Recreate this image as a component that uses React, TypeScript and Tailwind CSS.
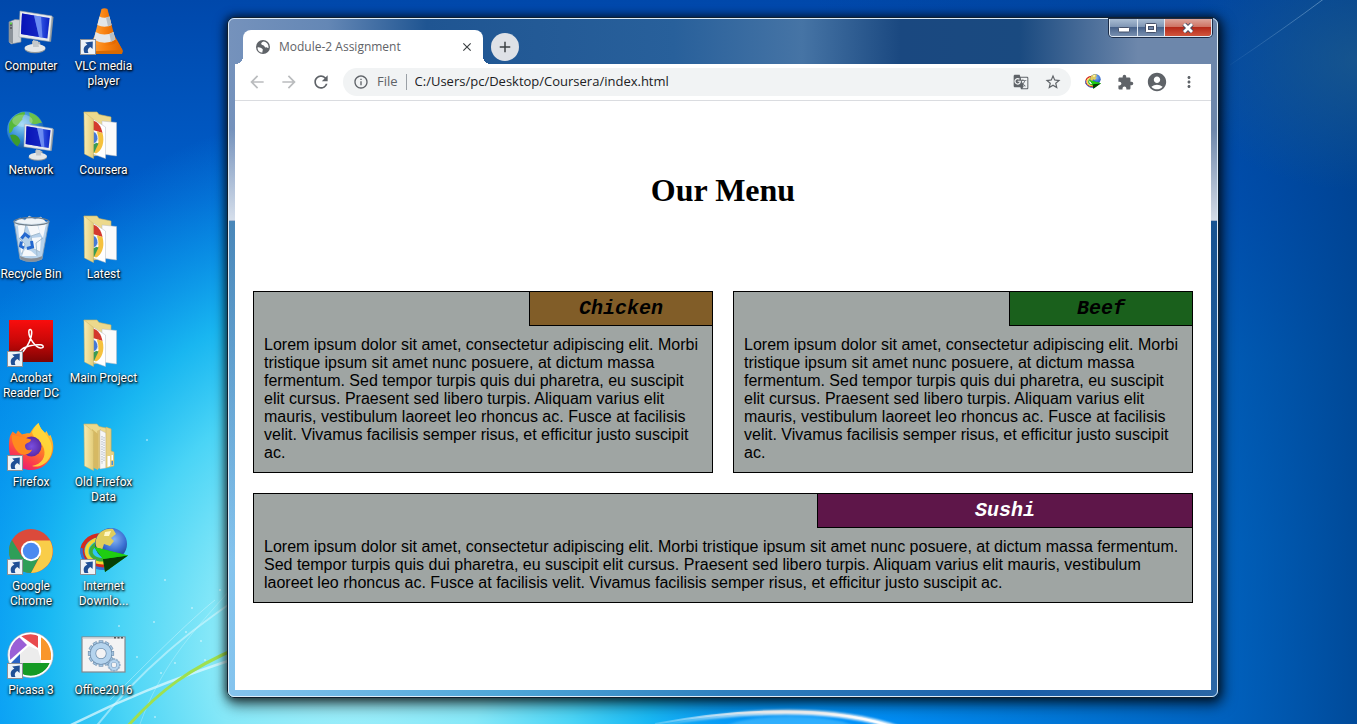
import type { ReactNode } from "react";
import {
  MdAccountCircle,
  MdAdd,
  MdArrowBack,
  MdArrowForward,
  MdClose,
  MdExtension,
  MdGTranslate,
  MdInfoOutline,
  MdMoreVert,
  MdRefresh,
  MdStarBorder,
} from "react-icons/md";

function Icon({ children, className = "size-12" }: { children: ReactNode; className?: string }) {
  return (
    <svg viewBox="0 0 48 48" className={`${className} shrink-0 overflow-visible`} aria-hidden="true">
      {children}
    </svg>
  );
}

function ShortcutArrow() {
  return (
    <g>
      <rect x="0.5" y="31.5" width="15" height="15" fill="#eef3f8" stroke="#8b8f96" />
      <path
        d="M4.500 45C2.800 41 4 37.800 7.400 36.800L5.200 34.600L12.800 33.400L12.600 41L10.400 39C8 40.200 7 42.200 8.400 45Z"
        fill="#1f4f96"
      />
    </g>
  );
}

function Monitor() {
  return (
    <g>
      <path d="M25 33L33 34L34 40H25Z" fill="#a9b0b5" />
      <ellipse cx="28" cy="41" rx="10.5" ry="4.2" fill="#8d959a" />
      <ellipse cx="28" cy="40" rx="10.5" ry="4" fill="#e4e7e8" />
      <path d="M26 32L31 33L32 39L26 39Z" fill="#c3c8cb" />
      <path d="M44 8L46.5 9L44 34L42 33Z" fill="#8f989e" />
      <path d="M13 3L45 8L42.5 33.5L12 29Z" fill="#e9ecee" stroke="#9aa4ab" strokeWidth="0.6" />
      <path d="M15 5.5L42.6 10L40.4 30.5L14 26Z" fill="url(#screen)" />
      <path d="M15 5.5L27 7.4L32 29L14 26Z" fill="#0712b4" opacity="0.75" />
      <path d="M27 7.4L34 8.6L35.5 29.6L32 29Z" fill="#7d9cf5" opacity="0.75" />
    </g>
  );
}

function ComputerIcon() {
  return (
    <Icon>
      <path d="M2 14L8 11.5L14 12V34L4 36L2 34Z" fill="#cfd4d8" stroke="#8a9299" strokeWidth="0.6" />
      <path d="M2 14L6 14.5V36L2 34Z" fill="#8b939a" />
      <path d="M3 17H5M3 20H5" stroke="#333" />
      <circle cx="4" cy="15.5" r="1" fill="#5be33c" />
      <Monitor />
    </Icon>
  );
}

function Globe({ cx, cy, r }: { cx: number; cy: number; r: number }) {
  const s = r / 18;
  return (
    <g transform={`translate(${cx} ${cy}) scale(${s})`}>
      <circle r="18" fill="url(#ocean)" />
      <path d="M-16 -6C-12 -14 -7 -17 -1 -17.6C1 -15 -4 -13 -3 -10C-6 -8 -7 -4 -11 -3C-13 -1 -12 2 -16 3Z" fill="#57b83a" />
      <path d="M3 -17C9 -16 14 -12 16 -7C12 -7 9 -4 5 -7C2 -9 6 -12 3 -17Z" fill="#6cc24a" />
      <path d="M-15 5C-10 3 -6 7 -5 11C-6 14 -7 15 -8 16C-12 13 -14 9 -15 5Z" fill="#3c9c2c" />
      <path d="M2 1C7 -1 12 2 11 7C9 12 6 13 4 11C4 7 1 5 2 1Z" fill="#4cae38" />
      <ellipse cx="-3" cy="-9" rx="10" ry="6" fill="#fff" opacity="0.25" />
    </g>
  );
}

function NetworkIcon() {
  return (
    <Icon>
      <Globe cx={18.5} cy={18} r={18.5} />
      <g transform="translate(6.500 9.500) scale(.87)">
        <Monitor />
      </g>
    </Icon>
  );
}

function VlcIcon() {
  return (
    <Icon>
      <path d="M14 30L35 29L43 43L42 46H8L7 43Z" fill="#d96a00" />
      <path d="M14 29L35 28.5L42.5 42L8 43.5Z" fill="url(#orange)" />
      <path d="M21.500 1Q24.500 -0.500 27.500 1L36 34C33 39 16 39 13 34Z" fill="url(#orange)" />
      <path d="M19.400 8.500Q24.500 11 29.500 8.500L31.500 17Q24.500 20.500 17.300 17Z" fill="#e3e6e8" />
      <path d="M15.600 24Q24.500 29 33.500 24L35.400 31.500Q24.500 38 13.700 31.500Z" fill="#e3e6e8" />
      <path d="M26 9.600L29.300 8.500L31.500 17L28 18.600ZM29.500 26L33.300 24L35.400 31.500L31 34Z" fill="#b9bfc4" />
      <ShortcutArrow />
    </Icon>
  );
}

function FolderIcon({ old = false }: { old?: boolean }) {
  return (
    <Icon>
      <path d="M4 0H17L19 2.500L31 5V40L14 44Z" fill="#ecd98c" stroke="#c9b25f" strokeWidth="0.6" />
      {old ? (
        <g>
          <path d="M17 7L21 5V44L17 45Z" fill="#dcc274" />
          <path d="M20 6L26 9V44L20 45Z" fill="#f7f7f7" stroke="#b6b6b6" strokeWidth="0.4" />
          <path d="M22 12V40M24 13V38" stroke="#8d98a8" strokeWidth="0.7" strokeDasharray="1.500 1" />
          <path d="M26 3L31 5V27L34 28V42L26 44Z" fill="#e8d181" stroke="#c9ae5c" strokeWidth="0.5" />
          <path d="M27.500 32H30V42L27.500 43Z" fill="#fff" />
          <path d="M31.500 31H33V36H31.500Z" fill="#fff" />
          <path d="M31.500 37H33V41H31.500Z" fill="#4a90d9" />
          <path d="M12 5L18 10V46L12 43Z" fill="#d6b963" />
        </g>
      ) : (
        <g>
          <path d="M22 9L36.500 10.500V44L22 42Z" fill="#fbfbfb" stroke="#b9bdc2" strokeWidth="0.5" />
          <path d="M13 7L25.500 15V46.500L13 42Z" fill="#fff" stroke="#b9bdc2" strokeWidth="0.5" />
          <path d="M13 8.500C18 10 21 14 22.500 21L13 18Z" fill="#d4392d" />
          <path d="M22.500 21C25 30 22 39 16 41.500L13 40L18.500 30L17 19.300Z" fill="#f5c13d" />
          <path d="M13 30L18.500 31.500L14 41L13 40.500Z" fill="#3a9b54" />
          <path d="M13 19Q18 21 18 27Q17 31.500 13 32Z" fill="#4579d4" stroke="#fff" strokeWidth="0.8" />
        </g>
      )}
      <path d="M4 0L13.500 7.500V46.500L4.500 42Z" fill="url(#flap)" stroke="#cdb76a" strokeWidth="0.5" />
    </Icon>
  );
}

function RecycleBinIcon() {
  return (
    <Icon>
      <path d="M8 6L13 2L18 4L22 0L28 3L34 1L39 6V10H8Z" fill="#eef3f7" stroke="#aebfcf" strokeWidth="0.7" />
      <path d="M7 5L13 43Q24 48 35 43L42 5Q24 11 7 5Z" fill="#cfe0ee" opacity="0.88" />
      <path d="M11 10L19 8L17 18L12 22ZM20 9L30 8L33 17L24 20ZM31 9L39 8L36 22L33 17ZM13 24L18 28L16 38L14 36ZM25 22L34 21L33 36L24 32ZM18 33L24 35L30 40H15Z" fill="#f5f8fb" />
      <path d="M19 8L17 18L24 20L25 32L33 36M33 17L24 20M36 22L29 27L30 40M12 22L18 28L15 38" fill="none" stroke="#9db5ca" strokeWidth="0.9" />
      <ellipse cx="24.500" cy="5.500" rx="17.500" ry="3.800" fill="none" stroke="#6e7d8a" strokeWidth="1.200" />
      <path d="M13 40Q24 45 35.500 40L35 43.500Q24 48.500 13.500 43.500Z" fill="#8a8e93" />
      <g fill="none" stroke="#2468cf" strokeWidth="3">
        <path d="M14.500 22.500L18 18L22.500 21.500" />
        <path d="M24.500 25L25.500 31L20 32.500" />
        <path d="M17 32L13.500 30L14.500 25.500" />
      </g>
      <path d="M7 5L13 43Q24 48 35 43L42 5" fill="none" stroke="#8299ae" strokeWidth="0.8" />
    </Icon>
  );
}

function AcrobatIcon() {
  return (
    <Icon>
      <rect x="2" y="0" width="44" height="42" fill="url(#acro)" />
      <path
        d="M13.500 30.500C11.500 33.500 14 34 16.500 31C20.500 26.500 25 18 24.700 12C24.600 8.500 21.800 8.700 21.800 12C22 18.500 28.500 27.500 33.500 28C37 28.200 37.200 25.300 33.500 24.800C27 24.200 16.500 26.500 13.500 30.500Z"
        fill="none"
        stroke="#fff"
        strokeWidth="1.500"
      />
      <ShortcutArrow />
    </Icon>
  );
}

function FirefoxIcon() {
  return (
    <Icon>
      <path
        d="M3 12L5.500 7.500L9 10L11 6.500L15 10.500C17 9.600 20 9 23 9.200C25 5.500 28 2 31.500 -1C32.500 3 35 6 38 9L39.500 7L42 12L43.500 11C46 17 47.300 23 45.500 29C42.500 39.500 34 46 24 46C11.500 46 2 36.500 2 24.500C1.800 20 2 16 3 12Z"
        fill="url(#fox)"
      />
      <path d="M31.500 -1C32.500 3 35 6 38 9C43 15 47 22 44 31C40 41 31 44 25 42C35 40 39 33 37 25C35 17 26 15 25 8C27 4 29 1 31.500 -1Z" fill="#ffd93b" opacity="0.9" />
      <circle cx="24.500" cy="22.500" r="10" fill="url(#purple)" />
      <path d="M5 11C10 11 12 13 15 13L24 15.500C24 19 18 18.500 18 22C18 26 22 27 25 25.500C23 31 15 33 10 27C7 23 4 17 5 11Z" fill="#ff8a1f" />
      <ShortcutArrow />
    </Icon>
  );
}

function ChromeIcon() {
  return (
    <Icon>
      <circle cx="24" cy="23" r="22" fill="#db4a3b" />
      <path d="M4.950 12L15 28.500L24 33L33 28L24 45A22 22 0 0 1 4.950 12Z" fill="#2f9e58" />
      <path d="M33.200 28L24 45A22 22 0 0 0 43.050 12.500H24Z" fill="#f9cd49" />
      <circle cx="24" cy="23" r="10.200" fill="#fff" />
      <circle cx="24" cy="23" r="8.200" fill="#4a8af0" />
      <ShortcutArrow />
    </Icon>
  );
}

function IdmArt() {
  return (
    <g>
      <g fill="none">
        <path d="M22 7C8 7 0 17 3 27C6 36 18 40 30 37" stroke="#d42a1e" strokeWidth="4" />
        <path d="M22 10.500C12 11 5 18 7 26C9 33 19 36 29 34" stroke="#f7d531" strokeWidth="3.500" />
        <path d="M22 14C15 15 10 20 11 25C13 31 20 33 28 31" stroke="#3fae37" strokeWidth="3.500" />
        <path d="M1.500 20C0 34 14 43 30 40" stroke="#2f6fd8" strokeWidth="2.500" />
      </g>
      <circle cx="31" cy="16" r="16" fill="url(#idmBall)" />
      <path d="M17 9C20 3 26 0 33 1L36 6L31 10L34 13L30 18L24 16L22 22L17 20C15 17 15 13 17 9Z" fill="#e0cd5c" />
      <path d="M25 4L31 3L29 8L24 8Z" fill="#fff8c4" />
      <path d="M14 19L48 27.500L25 44L23 31Z" fill="#12b70f" />
      <path d="M23 31L48 27.500L25 44Z" fill="#063f06" />
      <path d="M14 19L48 27.500L23 31Z" fill="#1fce12" />
    </g>
  );
}

function PicasaIcon() {
  return (
    <Icon>
      <circle cx="23.500" cy="23" r="22.500" fill="#fff" />
      <path d="M3 28C0 18 4 9 12 5L20 13Z" fill="#9a5fd6" />
      <path d="M14 4C20 1 27 1 31 4V16Z" fill="#e94b4f" />
      <path d="M34 5C42 10 45 19 44 28H34Z" fill="#f9962b" />
      <path d="M43 31C40 39 32 44 24 44C20 44 16 43 13 41V31Z" fill="#159a24" />
      <path d="M4 31L13 22V40C8 38 5 34 4 31Z" fill="#2b63c4" />
      <path d="M13 22L22 14L31 18L34 28V31H13Z" fill="#ececec" />
      <circle cx="23.500" cy="23" r="21.800" fill="none" stroke="#fff" strokeWidth="2" />
      <circle cx="23.500" cy="23" r="22.800" fill="none" stroke="#8a9cb0" strokeWidth="0.6" />
      <ShortcutArrow />
    </Icon>
  );
}

const teeth = [0, 30, 60, 90, 120, 150, 180, 210, 240, 270, 300, 330];

function Gear({ x, y, s }: { x: number; y: number; s: number }) {
  return (
    <g transform={`translate(${x} ${y}) scale(${s})`} stroke="#6f8fae">
      {teeth.map((a) => (
        <rect key={a} x="-2" y="-13" width="4" height="5" transform={`rotate(${a})`} fill="#a9cbe8" strokeWidth="0.7" />
      ))}
      <circle r="8.200" fill="none" strokeWidth="6.500" />
      <circle r="8.200" fill="none" stroke="#b5d4ee" strokeWidth="5" />
    </g>
  );
}

function BatchIcon() {
  return (
    <Icon>
      <rect x="2" y="5" width="43" height="35" fill="#f3f3f4" stroke="#85888d" strokeWidth="1.200" />
      <path d="M2.600 6H44.400" stroke="#cfd2d6" strokeWidth="1.500" />
      <path d="M34 5.800H43" stroke="#555" strokeWidth="1.500" strokeDasharray="2 1.500" />
      <Gear x={21} y={21.5} s={0.98} />
      <Gear x={34} y={33} s={0.48} />
    </Icon>
  );
}

const shortcuts: { lines: string[]; icon: ReactNode }[] = [
  { lines: ["Computer"], icon: <ComputerIcon /> },
  { lines: ["VLC media", "player"], icon: <VlcIcon /> },
  { lines: ["Network"], icon: <NetworkIcon /> },
  { lines: ["Coursera"], icon: <FolderIcon /> },
  { lines: ["Recycle Bin"], icon: <RecycleBinIcon /> },
  { lines: ["Latest"], icon: <FolderIcon /> },
  { lines: ["Acrobat", "Reader DC"], icon: <AcrobatIcon /> },
  { lines: ["Main Project"], icon: <FolderIcon /> },
  { lines: ["Firefox"], icon: <FirefoxIcon /> },
  { lines: ["Old Firefox", "Data"], icon: <FolderIcon old /> },
  { lines: ["Google", "Chrome"], icon: <ChromeIcon /> },
  {
    lines: ["Internet", "Downlo..."],
    icon: (
      <Icon>
        <IdmArt />
        <ShortcutArrow />
      </Icon>
    ),
  },
  { lines: ["Picasa 3"], icon: <PicasaIcon /> },
  { lines: ["Office2016"], icon: <BatchIcon /> },
];

function Defs() {
  return (
    <defs>
      <linearGradient id="screen" x1="0" x2="1">
        <stop offset="0" stopColor="#0a18c0" />
        <stop offset="0.6" stopColor="#3c62ea" />
        <stop offset="1" stopColor="#0a22c4" />
      </linearGradient>
      <radialGradient id="ocean" cx="0.4" cy="0.35" r="0.7">
        <stop offset="0" stopColor="#8fd2f4" />
        <stop offset="0.6" stopColor="#2c86d3" />
        <stop offset="1" stopColor="#124f9c" />
      </radialGradient>
      <linearGradient id="orange" x1="0" x2="1">
        <stop offset="0" stopColor="#ffa640" />
        <stop offset="0.5" stopColor="#f98210" />
        <stop offset="1" stopColor="#e06500" />
      </linearGradient>
      <linearGradient id="flap" x1="0" x2="1">
        <stop offset="0" stopColor="#f7ebb0" />
        <stop offset="1" stopColor="#e3cc78" />
      </linearGradient>
      <linearGradient id="acro" x1="0" x2="0" y1="0" y2="1">
        <stop offset="0" stopColor="#f90d0d" />
        <stop offset="0.5" stopColor="#c90808" />
        <stop offset="1" stopColor="#7d0404" />
      </linearGradient>
      <linearGradient id="fox" x1="0.8" x2="0.2" y1="0" y2="1">
        <stop offset="0" stopColor="#ffdf3f" />
        <stop offset="0.4" stopColor="#ff8a20" />
        <stop offset="0.75" stopColor="#fb3c4c" />
        <stop offset="1" stopColor="#e01585" />
      </linearGradient>
      <radialGradient id="purple">
        <stop offset="0" stopColor="#7a4fe0" />
        <stop offset="1" stopColor="#5a2aa8" />
      </radialGradient>
      <radialGradient id="idmBall" cx="0.6" cy="0.35" r="0.7">
        <stop offset="0" stopColor="#86b4f2" />
        <stop offset="0.5" stopColor="#3a6fd2" />
        <stop offset="1" stopColor="#123272" />
      </radialGradient>
      <linearGradient id="sky" x1="0" x2="0" y1="0" y2="1">
        <stop offset="0" stopColor="#0048ab" />
        <stop offset="0.28" stopColor="#005fcc" />
        <stop offset="0.5" stopColor="#0084e4" />
        <stop offset="0.75" stopColor="#0093f6" />
        <stop offset="1" stopColor="#0096ff" />
      </linearGradient>
      <linearGradient id="dusk" x1="0" x2="1">
        <stop offset="0.6" stopColor="#003f8c" stopOpacity="0" />
        <stop offset="0.9" stopColor="#00459c" stopOpacity="0.65" />
        <stop offset="1" stopColor="#00408c" stopOpacity="0.88" />
      </linearGradient>
      <radialGradient id="glow">
        <stop offset="0" stopColor="#a4f0fb" />
        <stop offset="0.3" stopColor="#86e8f8" />
        <stop offset="0.5" stopColor="#4ad4f6" />
        <stop offset="0.66" stopColor="#1cbcf2" stopOpacity="0.9" />
        <stop offset="0.82" stopColor="#0ea0ee" stopOpacity="0.55" />
        <stop offset="1" stopColor="#0a90ea" stopOpacity="0" />
      </radialGradient>
      <radialGradient id="corner">
        <stop offset="0" stopColor="#24608c" stopOpacity="0.6" />
        <stop offset="1" stopColor="#24608c" stopOpacity="0" />
      </radialGradient>
      <linearGradient id="arc" x1="0" x2="1">
        <stop offset="0" stopColor="#fff" stopOpacity="0.2" />
        <stop offset="0.5" stopColor="#fff" />
        <stop offset="1" stopColor="#fff" stopOpacity="0.9" />
      </linearGradient>
      <linearGradient id="streak" x1="0" x2="1" y1="1" y2="0">
        <stop offset="0" stopColor="#9cc4e4" stopOpacity="0.05" />
        <stop offset="1" stopColor="#9cc4e4" stopOpacity="0.5" />
      </linearGradient>
      <filter id="soft" x="-20%" y="-20%" width="140%" height="140%">
        <feGaussianBlur stdDeviation="1" />
      </filter>
    </defs>
  );
}

const stars = [
  [119, 626], [154, 622], [137, 657], [201, 641], [186, 632], [175, 663], [161, 673], [155, 717], [205, 660], [192, 608], [165, 580], [220, 590], [147, 440],
];

function Wallpaper() {
  return (
    <svg viewBox="0 0 1357 724" preserveAspectRatio="none" className="absolute inset-0 size-full" aria-hidden="true">
      <Defs />
      <rect width="1357" height="724" fill="url(#sky)" />
      <ellipse cx="350" cy="650" rx="460" ry="540" fill="url(#glow)" />
      <rect width="1357" height="724" fill="url(#dusk)" />
      <ellipse cx="1357" cy="60" rx="180" ry="130" fill="url(#corner)" />
      <path d="M1230 65Q1285 28 1325 -2" stroke="url(#streak)" fill="none" />
      <g fill="none" stroke="#e6fbff">
        <path d="M65 728C120 700 170 680 240 657" strokeWidth="2.500" strokeOpacity="0.7" />
        <path d="M95 728C140 670 190 630 250 590" strokeWidth="2" strokeOpacity="0.5" />
        <path d="M110 700C150 660 190 620 215 600" strokeOpacity="0.4" />
        <path d="M140 724C160 670 185 640 230 590" strokeOpacity="0.3" />
      </g>
      <path d="M126 728C160 690 190 668 240 647" fill="none" stroke="#9fe04e" strokeWidth="3" />
      {stars.map(([x, y]) => (
        <circle key={`${x}-${y}`} cx={x} cy={y} r="1" fill="#fff" fillOpacity="0.5" />
      ))}
      <ellipse cx="790" cy="740" rx="80" ry="24" fill="#5cc8ff" fillOpacity="0.5" filter="url(#soft)" />
      <path d="M655 726C740 706 835 702 905 728L888 728C830 709 745 712 655 726Z" fill="url(#arc)" filter="url(#soft)" />
      <path d="M655 724C740 708 830 706 890 726" fill="none" stroke="url(#arc)" strokeWidth="2" />
    </svg>
  );
}

function ToolButton({ label, children }: { label: string; children: ReactNode }) {
  return (
    <button type="button" aria-label={label} className="flex h-7 w-8 shrink-0 items-center justify-center text-[#5f6368]">
      {children}
    </button>
  );
}

function TitleBar() {
  return (
    <header className="flex h-[45px] items-start pl-2">
      <div className="relative mt-[11px] flex h-[34px] w-60 items-center rounded-t-lg bg-white pr-2 pl-3">
        <span className="absolute bottom-0 -left-2 size-2 bg-[radial-gradient(circle_at_0_0,transparent_8px,white_8px)]" />
        <span className="absolute -right-2 bottom-0 size-2 bg-[radial-gradient(circle_at_100%_0,transparent_8px,white_8px)]" />
        <svg viewBox="0 0 16 16" className="size-4" aria-hidden="true">
          <circle cx="8" cy="8" r="7" fill="#5f6368" />
          <path d="M2.500 8.500C4.500 8 6 9 7.500 10C8.500 11 7 12 7.500 13.500C4.500 13.500 2.500 11.500 2.500 8.500Z" fill="#fff" />
          <path d="M8.500 2.500C7 3.200 5.500 4 6.500 5.500C7.500 6.500 9 6 9.500 7.500C10 9 12 8.500 13.500 9C14 6 12 3 8.500 2.500Z" fill="#fff" />
        </svg>
        <span className="ml-2 flex-1 truncate text-xs text-[#5f6368]">Module-2 Assignment</span>
        <button type="button" aria-label="Close tab" className="flex size-4 items-center justify-center text-[#3c4043]">
          <MdClose className="size-[14px]" />
        </button>
      </div>
      <button
        type="button"
        aria-label="New tab"
        className="mt-[14px] ml-2 flex size-7 items-center justify-center rounded-full bg-[#dee1e6] text-[#3c4043]"
      >
        <MdAdd className="size-[18px]" />
      </button>
      <div className="-mr-px ml-auto flex h-[18px] divide-x divide-[#dfe8f2] overflow-hidden rounded-b border border-t-0 border-[#dfe8f2] shadow-[0_0_0_1px_#1b2c47]">
        <button type="button" aria-label="Minimize" className="flex w-7 items-center justify-center bg-[linear-gradient(#a9bdd3,#8097b5_45%,#47628a_50%,#7890b0)]">
          <svg viewBox="0 0 12 6" className="mt-1 h-[6px] w-3" aria-hidden="true">
            <rect x="0.500" y="0.500" width="11" height="4.500" rx="1" fill="#fff" stroke="#46526b" />
          </svg>
        </button>
        <button type="button" aria-label="Maximize" className="flex w-[27px] items-center justify-center bg-[linear-gradient(#a9bdd3,#8097b5_45%,#47628a_50%,#7890b0)]">
          <svg viewBox="0 0 12 10" className="h-[10px] w-3" aria-hidden="true">
            <rect x="0.500" y="0.500" width="11" height="9" rx="1" fill="#fff" stroke="#46526b" />
            <rect x="3.500" y="3.500" width="5" height="3" fill="#6f86a8" stroke="#46526b" />
          </svg>
        </button>
        <button type="button" aria-label="Close" className="flex w-[46px] items-center justify-center bg-[linear-gradient(#dda59b,#cf7465_45%,#b5291a_50%,#d1553c)]">
          <svg viewBox="0 0 12 10" className="h-[10px] w-3" aria-hidden="true">
            <path d="M2 1L10 9M10 1L2 9" stroke="#4a4f63" strokeWidth="4.600" />
            <path d="M2 1L10 9M10 1L2 9" stroke="#fff" strokeWidth="2.800" />
          </svg>
        </button>
      </div>
    </header>
  );
}

function Toolbar() {
  return (
    <div className="flex h-[37px] items-center border-b border-[#dadce0] bg-white px-[6px]">
      <button type="button" aria-label="Back" className="flex h-7 w-8 items-center justify-center text-[#babcbe]">
        <MdArrowBack className="size-5" />
      </button>
      <button type="button" aria-label="Forward" className="flex h-7 w-8 items-center justify-center text-[#babcbe]">
        <MdArrowForward className="size-5" />
      </button>
      <ToolButton label="Reload">
        <MdRefresh className="size-5" />
      </ToolButton>
      <div className="mx-[6px] flex h-7 flex-1 items-center rounded-full bg-[#f1f3f4] pr-[2px] pl-[10px]">
        <MdInfoOutline className="size-4 text-[#5f6368]" />
        <label htmlFor="address" className="ml-2 text-[13px] text-[#5f6368]">
          File
        </label>
        <span className="mx-2 h-4 w-px bg-[#9aa0a6]" />
        <input
          id="address"
          type="text"
          defaultValue="C:/Users/pc/Desktop/Coursera/index.html"
          className="min-w-0 flex-1 bg-transparent text-[13px] text-[#202124] outline-none"
        />
        <ToolButton label="Translate this page">
          <MdGTranslate className="size-4" />
        </ToolButton>
        <ToolButton label="Bookmark this page">
          <MdStarBorder className="size-[18px]" />
        </ToolButton>
      </div>
      <ToolButton label="Download manager">
        <Icon className="size-4">
          <IdmArt />
        </Icon>
      </ToolButton>
      <ToolButton label="Extensions">
        <MdExtension className="size-[17px]" />
      </ToolButton>
      <ToolButton label="Profile">
        <MdAccountCircle className="size-[22px]" />
      </ToolButton>
      <ToolButton label="More">
        <MdMoreVert className="size-[18px]" />
      </ToolButton>
    </div>
  );
}

const lorem =
  "Lorem ipsum dolor sit amet, consectetur adipiscing elit. Morbi tristique ipsum sit amet nunc posuere, at dictum massa fermentum. Sed tempor turpis quis dui pharetra, eu suscipit elit cursus. Praesent sed libero turpis. Aliquam varius elit mauris, vestibulum laoreet leo rhoncus ac. Fusce at facilisis velit. Vivamus facilisis semper risus, et efficitur justo suscipit ac.";

function MenuSection({ title, tone, className = "" }: { title: string; tone: string; className?: string }) {
  return (
    <section className={`border border-black bg-[#9fa5a3] ${className}`}>
      <h2
        className={`ml-auto flex h-[34px] w-2/5 items-center justify-center border-b border-l border-black font-['Liberation_Mono',monospace] text-xl font-bold italic ${tone}`}
      >
        {title}
      </h2>
      <p className="p-[10px] text-base leading-[18px] text-black">{lorem}</p>
    </section>
  );
}

export default function App() {
  return (
    <main className="relative flex min-h-screen overflow-hidden font-['Open_Sans',sans-serif]">
      <Wallpaper />
      <nav aria-label="Desktop" className="relative pt-2">
        <ul className="grid grid-cols-[62px_75px] gap-x-1 gap-y-[23px]">
          {shortcuts.map(({ lines, icon }) => (
            <li key={lines.join(" ")} className="min-h-[81px]">
              <button type="button" className="flex w-full flex-col items-center gap-[3px]">
                {icon}
                <span className="flex flex-col items-center font-[Roboto,sans-serif] text-xs leading-[15px] whitespace-nowrap text-white [text-shadow:1px_1px_2px_#000,0_1px_3px_#000]">
                  {lines.map((line) => (
                    <span key={line}>{line}</span>
                  ))}
                </span>
              </button>
            </li>
          ))}
        </ul>
      </nav>

      <div className="relative mt-[17px] mr-[138px] mb-[26px] ml-[86px] flex min-w-0 flex-1 rounded-[7px] border border-[#10202f] shadow-[0_0_8px_1px_rgba(0,0,0,0.6),2px_5px_14px_2px_rgba(0,0,0,0.6)]">
        <div className="flex min-w-0 flex-1 flex-col rounded-md border border-[#dcebf7] bg-[linear-gradient(180deg,transparent_110px,rgba(255,255,255,0.7)_201px,transparent_202px),linear-gradient(90deg,#7592bc,#6487b5_10%,#1f5592_20%,#28609b_45%,#4674a5_58%,#1a4880_68%,#1a4a80_80%,#6d87ab_92%,#6d87ab),linear-gradient(180deg,rgba(0,60,120,0.45)_202px,transparent_80%),linear-gradient(90deg,#85c4ee,#4ea6d8_28%,#2f80bf_50%,#1a5ea8_80%,#2a66a5)] bg-[length:100%_100%,100%_202px,100%_100%,100%_100%] bg-no-repeat px-[6px] pb-[6px]">
          <TitleBar />
          <Toolbar />
          <article className="flex-1 bg-white px-[18px] pb-[87px] font-['Liberation_Sans',Arial,sans-serif]">
            <h1 className="pt-[71px] pb-[83px] text-center font-['Liberation_Serif',serif] text-[32px] leading-9 font-bold text-black">
              Our Menu
            </h1>
            <div className="grid grid-cols-2 gap-5">
              <MenuSection title="Chicken" tone="bg-[#815d28] text-black" />
              <MenuSection title="Beef" tone="bg-[#1a601c] text-black" />
              <MenuSection title="Sushi" tone="bg-[#5e1649] text-white" className="col-span-2" />
            </div>
          </article>
        </div>
      </div>
    </main>
  );
}
